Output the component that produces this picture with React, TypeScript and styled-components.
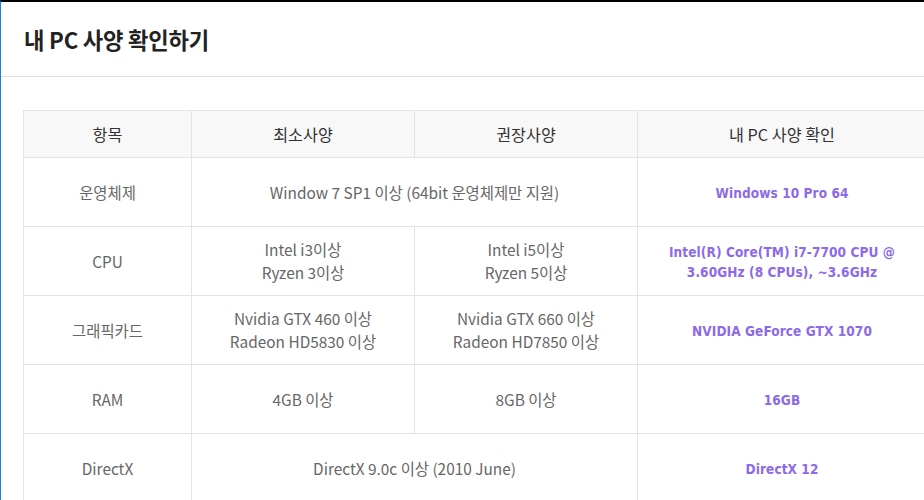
import React from "react";
import styled, { createGlobalStyle } from "styled-components";

const Global = createGlobalStyle`
  html, body { margin: 0; padding: 0; background: #fff; }
  body { font-family: "Noto Sans CJK KR", "Noto Sans", sans-serif; overflow: hidden; }
`;

const Frame = styled.div`
  width: 924px;
  height: 500px;
  box-sizing: border-box;
  border-top: 2px solid #000;
  border-left: 1px solid #1a82dc;
  overflow: hidden;
`;

const Header = styled.div`
  height: 75px;
  box-sizing: border-box;
  border-bottom: 1px solid #e0e0e0;
  display: flex;
  align-items: center;
  padding: 0 23px 1px;
`;

const Title = styled.h1`
  margin: 0;
  font-size: 22.2px;
  font-weight: 700;
  color: #222;
  letter-spacing: -0.2px;
`;

const Body = styled.div`
  padding: 33px 0 0 22px;
`;

const Table = styled.table`
  border-collapse: collapse;
  table-layout: fixed;
  width: 903px;
  font-size: 15.4px;
`;

const Th = styled.th`
  height: 46px;
  padding: 0;
  background: #f8f8f8;
  border: 1px solid #e4e4e4;
  font-weight: 400;
  font-size: 16.2px;
  color: #333;
  text-align: center;
  vertical-align: middle;
`;

const Td = styled.td<{ $mine?: boolean }>`
  height: 68px;
  padding: 0;
  border: 1px solid #e4e4e4;
  text-align: center;
  vertical-align: middle;
  color: #666;
  line-height: 23px;
  ${(p) =>
    p.$mine &&
    `
    color: #8c6ae8;
    font-family: "DejaVu Sans Condensed", "DejaVu Sans", Verdana, sans-serif;
    font-stretch: condensed;
    font-weight: 700;
    font-size: 13.5px;
    letter-spacing: 0.1px;
    line-height: 20px;
  `}
`;

const MineText = styled.span`
  display: inline-block;
  transform: translateY(1px);
`;

type Row = {
  label: string;
  min: string[];
  rec?: string[];
  mine: string[];
};

const rows: Row[] = [
  { label: "운영체제", min: ["Window 7 SP1 이상 (64bit 운영체제만 지원)"], mine: ["Windows 10 Pro 64"] },
  {
    label: "CPU",
    min: ["Intel i3이상", "Ryzen 3이상"],
    rec: ["Intel i5이상", "Ryzen 5이상"],
    mine: ["Intel(R) Core(TM) i7-7700 CPU @", "3.60GHz (8 CPUs), ~3.6GHz"],
  },
  {
    label: "그래픽카드",
    min: ["Nvidia GTX 460 이상", "Radeon HD5830 이상"],
    rec: ["Nvidia GTX 660 이상", "Radeon HD7850 이상"],
    mine: ["NVIDIA GeForce GTX 1070"],
  },
  { label: "RAM", min: ["4GB 이상"], rec: ["8GB 이상"], mine: ["16GB"] },
  { label: "DirectX", min: ["DirectX 9.0c 이상 (2010 June)"], mine: ["DirectX 12"] },
];

const Lines = ({ items }: { items: string[] }) => (
  <>
    {items.map((t, i) => (
      <React.Fragment key={i}>
        {i > 0 && <br />}
        {t}
      </React.Fragment>
    ))}
  </>
);

export default function App() {
  return (
    <>
      <Global />
      <Frame>
        <Header>
          <Title>내 PC 사양 확인하기</Title>
        </Header>
        <Body>
          <Table>
            <colgroup>
              <col style={{ width: 168 }} />
              <col style={{ width: 223 }} />
              <col style={{ width: 223 }} />
              <col style={{ width: 289 }} />
            </colgroup>
            <thead>
              <tr>
                <Th>항목</Th>
                <Th>최소사양</Th>
                <Th>권장사양</Th>
                <Th>내 PC 사양 확인</Th>
              </tr>
            </thead>
            <tbody>
              {rows.map((r) => (
                <tr key={r.label}>
                  <Td>{r.label}</Td>
                  {r.rec ? (
                    <>
                      <Td>
                        <Lines items={r.min} />
                      </Td>
                      <Td>
                        <Lines items={r.rec} />
                      </Td>
                    </>
                  ) : (
                    <Td colSpan={2}>
                      <Lines items={r.min} />
                    </Td>
                  )}
                  <Td $mine>
                    <MineText>
                      <Lines items={r.mine} />
                    </MineText>
                  </Td>
                </tr>
              ))}
            </tbody>
          </Table>
        </Body>
      </Frame>
    </>
  );
}
